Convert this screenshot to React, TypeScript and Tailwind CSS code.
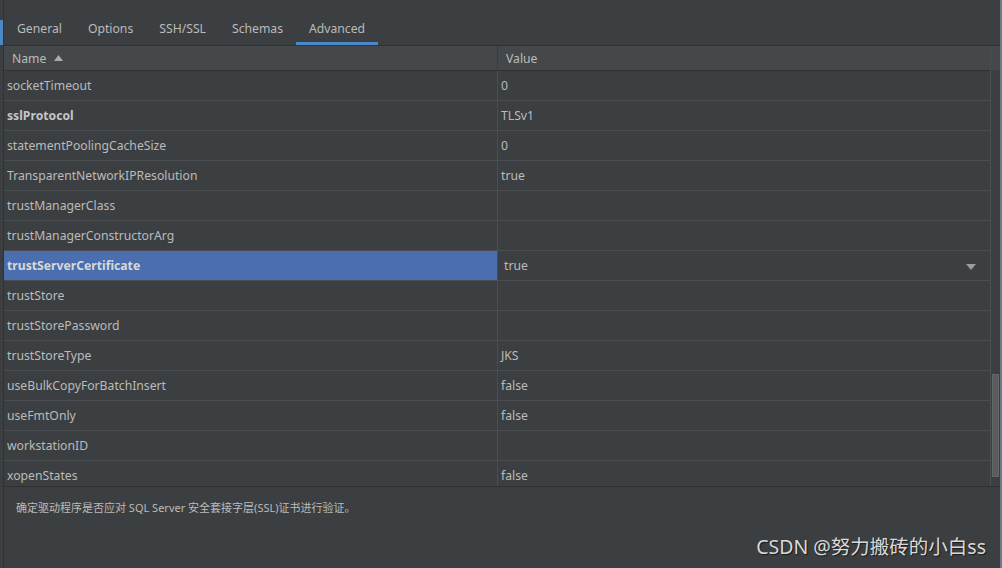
const rows: { name: string; value: string; bold?: boolean; selected?: boolean }[] = [
  { name: 'socketTimeout', value: '0' },
  { name: 'sslProtocol', value: 'TLSv1', bold: true },
  { name: 'statementPoolingCacheSize', value: '0' },
  { name: 'TransparentNetworkIPResolution', value: 'true' },
  { name: 'trustManagerClass', value: '' },
  { name: 'trustManagerConstructorArg', value: '' },
  { name: 'trustServerCertificate', value: 'true', bold: true, selected: true },
  { name: 'trustStore', value: '' },
  { name: 'trustStorePassword', value: '' },
  { name: 'trustStoreType', value: 'JKS' },
  { name: 'useBulkCopyForBatchInsert', value: 'false' },
  { name: 'useFmtOnly', value: 'false' },
  { name: 'workstationID', value: '' },
  { name: 'xopenStates', value: 'false' },
];

const tabs = ['General', 'Options', 'SSH/SSL', 'Schemas', 'Advanced'];

export default function App() {
  return (
    <div className="w-[1002px] h-[568px] bg-[#3c3f41] flex text-[#bbbbbb] text-[12.2px] font-['Noto_Sans','Noto_Sans_CJK_SC',sans-serif] overflow-hidden relative">
      {/* left gutter */}
      <div className="w-[4px] flex flex-col border-r border-[#323232]">
        <div className="h-[20px]" />
        <div className="h-[25px] w-[3px] bg-[#4a88c7]" />
        <div className="flex-1" />
      </div>

      <div className="flex-1 flex flex-col min-w-0">
        {/* tabs */}
        <div className="h-[46px] flex items-end border-b border-[#323232]">
          {tabs.map((t) => (
            <div key={t} className="h-[32px] px-[13px] flex items-center relative">
              <span>{t}</span>
              {t === 'Advanced' && <div className="absolute left-0 right-0 bottom-0 h-[3px] bg-[#4a88c7]" />}
            </div>
          ))}
        </div>

        {/* table + scrollbar */}
        <div className="h-[441px] flex overflow-hidden border-b border-[#2f3133]">
          <div className="w-[986px] flex flex-col">
            <div className="h-[25px] bg-[#45484a] border-b border-[#323232] grid grid-cols-[493px_1fr] shrink-0">
              <div className="flex items-center pl-[8px] gap-[8px] pt-[2px]">
                <span>Name</span>
                <svg width="9" height="6" viewBox="0 0 9 6" className="mt-[-2px]">
                  <path d="M0 6 L4.5 0 L9 6 Z" fill="#a9abad" />
                </svg>
              </div>
              <div className="flex items-center pl-[8px] pt-[2px] border-l border-[#3a3c3e]">Value</div>
            </div>
            {rows.map((r) => (
              <div
                key={r.name}
                className="h-[30px] shrink-0 grid grid-cols-[493px_1fr] border-b border-[#4b4e50]"
              >
                <div
                  className={
                    'flex items-center pl-[3px] pt-[2px] ' +
                    (r.selected ? 'bg-[#4b6eaf] text-[#d6d8da] font-bold' : r.bold ? 'font-bold text-[#c4c6c8]' : '')
                  }
                >
                  {r.name}
                </div>
                <div
                  className={
                    'flex items-center pt-[2px] border-l border-[#4b4e50] ' +
                    (r.selected ? 'pl-[6px] pr-[14px] justify-between' : 'pl-[3px]')
                  }
                >
                  <span>{r.value}</span>
                  {r.selected && (
                    <svg width="10" height="6" viewBox="0 0 10 6">
                      <path d="M0 0 L10 0 L5 6 Z" fill="#9a9c9e" />
                    </svg>
                  )}
                </div>
              </div>
            ))}
          </div>
          <div className="flex-1 flex flex-col border-l border-[#4b4e50] bg-[#3c3f41] relative">
            <div className="h-[24px] bg-[#45484a]" />
            <div className="flex-1" />
            <div className="absolute left-[1px] right-[1px] top-[328px] h-[103px] bg-[#595c5e] border border-[#666]" />
          </div>
        </div>

        {/* description */}
        <div className="flex-1 pl-[12px] pt-[13px] text-[11px]">
          确定驱动程序是否应对 SQL Server 安全套接字层(SSL)证书进行验证。
        </div>
      </div>
      <div className="w-[2px] bg-[#6b7a8a]" />

      <div className="absolute right-[16px] bottom-[7px] text-[19.5px] text-[#d9d9d9] [text-shadow:1px_1px_1px_#1a1a1a]">
        CSDN @努力搬砖的小白ss
      </div>
    </div>
  );
}
